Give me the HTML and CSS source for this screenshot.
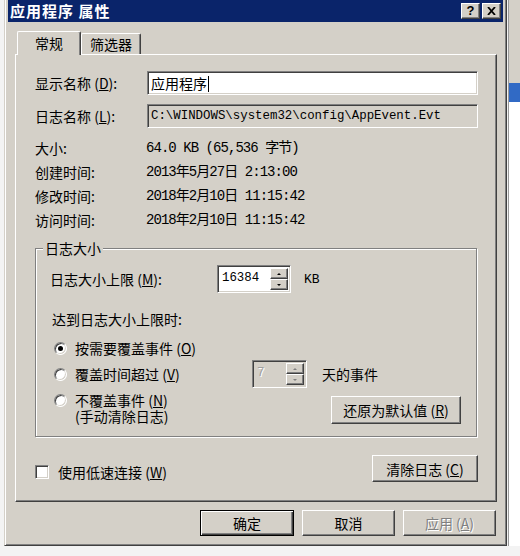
FILE: index.html
```html
<!DOCTYPE html>
<html lang="zh-CN">
<head>
	<meta charset="UTF-8">
	<title>应用程序 属性</title>
	<link rel="stylesheet" href="styles.css">
</head>
<body>

	<div class="backdrop"></div>

	<div class="window">
		<!-- 标题栏 -->
		<div class="titlebar">
			<span class="title">应用程序 属性</span>
			<div class="title-btns">
				<span class="tbtn">?</span>
				<span class="tbtn">
					<svg width="9" height="8" viewBox="0 0 9 8"><path d="M1 0l7 8M8 0l-7 8" stroke="#000" stroke-width="1.8"/></svg>
				</span>
			</div>
		</div>

		<div class="client">
			<div class="tabs">
				<span class="tab active">常规</span>
				<span class="tab">筛选器</span>
			</div>

			<div class="panel">
				<div class="field-row">
					<span class="label">显示名称 (<u>D</u>):</span>
					<div class="field">应用程序<span class="caret"></span></div>
				</div>
				<div class="field-row">
					<span class="label">日志名称 (<u>L</u>):</span>
					<div class="field readonly">C:\WINDOWS\system32\config\AppEvent.Evt</div>
				</div>

				<div class="info">
					<div class="info-row"><span class="label">大小:</span><span class="value">64.0 KB (65,536 字节)</span></div>
					<div class="info-row"><span class="label">创建时间:</span><span class="value">2013年5月27日 2:13:00</span></div>
					<div class="info-row"><span class="label">修改时间:</span><span class="value">2018年2月10日 11:15:42</span></div>
					<div class="info-row"><span class="label">访问时间:</span><span class="value">2018年2月10日 11:15:42</span></div>
				</div>

				<!-- 日志大小 -->
				<div class="group">
					<span class="group-title">日志大小</span>

					<div class="limit-row">
						<span class="limit-label">日志大小上限 (<u>M</u>):</span>
						<div class="spin">
							<span class="spin-text">16384</span>
							<span class="spin-btns"><span class="spin-up"></span><span class="spin-down"></span></span>
						</div>
						<span class="unit">KB</span>
					</div>

					<div class="when">达到日志大小上限时:</div>

					<div class="radio-row first">
						<span class="radio checked"></span>
						<span class="radio-label">按需要覆盖事件 (<u>O</u>)</span>
					</div>
					<div class="radio-row days">
						<span class="radio"></span>
						<span class="radio-label">覆盖时间超过 (<u>V</u>)</span>
						<div class="spin small disabled">
							<span class="spin-text">7</span>
							<span class="spin-btns"><span class="spin-up"></span><span class="spin-down"></span></span>
						</div>
						<span class="days-text">天的事件</span>
					</div>
					<div class="radio-row last">
						<span class="radio"></span>
						<span class="radio-label two">不覆盖事件 (<u>N</u>)<br>(手动清除日志)</span>
						<span class="btn restore">还原为默认值 (<u>R</u>)</span>
					</div>
				</div>

				<div class="bottom-row">
					<span class="check"></span>
					<span class="check-label">使用低速连接 (<u>W</u>)</span>
					<span class="btn clear">清除日志 (<u>C</u>)</span>
				</div>
			</div>

			<div class="actions">
				<span class="btn default">确定</span>
				<span class="btn">取消</span>
				<span class="btn disabled">应用 (<u>A</u>)</span>
			</div>
		</div>
	</div>

</body>
</html>
```

FILE: styles.css
```css
*{margin: 0;padding: 0;box-sizing: border-box;}
html{background-color: #f3f3f3;}
body{position: relative;font-family: "Noto Sans CJK SC", "Liberation Sans", sans-serif;font-size: 14px;color: #000;}

.backdrop{position: absolute;left: 508px;top: 0;width: 12px;height: 548px;background: linear-gradient(#d4d0c8 0, #d4d0c8 83px, #316ac5 83px, #316ac5 102px, #fff 102px);border-left: 1px solid #9a9a9a;}

.window{position: relative;width: 503px;margin: -4px 0 0 4px;background-color: #d4d0c8;padding: 3px;border: 1px solid;border-color: #d4d0c8 #404040 #404040 #d4d0c8;box-shadow: inset 1px 1px #fff, inset -1px -1px #808080;}

/* 标题栏 */
.titlebar{height: 22px;background-color: #0a246a;display: flex;align-items: center;justify-content: space-between;padding: 0 2px;}
.title{color: #fff;font-weight: bold;font-size: 15px;letter-spacing: 1px;line-height: 22px;}
.title-btns{display: flex;gap: 2px;}
.tbtn{width: 19px;height: 16px;background-color: #d4d0c8;border: 1px solid;border-color: #fff #404040 #404040 #fff;box-shadow: inset -1px -1px #808080;display: flex;align-items: center;justify-content: center;font-family: "Liberation Sans", sans-serif;font-weight: bold;font-size: 13px;line-height: 14px;}

.client{padding: 9px 6px 6px 7px;}

/* 选项卡 */
.tabs{display: flex;align-items: flex-end;height: 24px;margin-bottom: -1px;padding-left: 2px;}
.tab{height: 21px;margin-bottom: 1px;padding: 1px 8px 0;line-height: 19px;background-color: #d4d0c8;border: 1px solid;border-bottom: none;border-color: #fff #404040 #404040 #fff;border-radius: 2px 2px 0 0;box-shadow: inset -1px 0 #808080;}
.tab.active{position: relative;z-index: 1;height: 24px;margin-bottom: 0;padding: 1px 17px 0;line-height: 20px;}

.panel{height: 448px;padding: 16px 18px 0 19px;border: 1px solid;border-color: #fff #404040 #404040 #fff;box-shadow: inset -1px -1px #808080;}

.field-row{display: grid;grid-template-columns: 112px 1fr;align-items: center;height: 24px;}
.field-row + .field-row{margin-top: 9px;}
.field{height: 24px;padding-left: 3px;line-height: 22px;background-color: #fff;border: 1px solid;border-color: #808080 #fff #fff #808080;box-shadow: inset 1px 1px #404040, inset -1px -1px #d4d0c8;white-space: nowrap;overflow: hidden;}
.field.readonly{background-color: #d4d0c8;font-family: "Liberation Mono", monospace;font-size: 12.4px;padding-left: 3px;}
.caret{display: inline-block;width: 1px;height: 16px;background-color: #000;vertical-align: -3px;margin-left: 1px;}

.info{margin-top: 8px;}
.info-row{display: grid;grid-template-columns: 111px 1fr;line-height: 24px;}
.value{font-family: "Liberation Mono", "Noto Sans CJK SC", monospace;letter-spacing: -0.95px;}

/* 日志大小 */
.group{margin: 16px 1px 0 0;padding: 0 15px 12px 14px;border: 1px solid #808080;box-shadow: inset 1px 1px #fff, 1px 1px #fff;}
.group-title{display: table;margin: -11px 0 0 -7px;padding: 0 2px;line-height: 20px;background-color: #d4d0c8;}

.limit-row{display: flex;align-items: center;height: 28px;margin-top: 7px;}
.limit-label{width: 167px;}
.unit{margin-left: 13px;font-family: "Liberation Mono", monospace;font-size: 13px;}

.spin{display: flex;width: 74px;height: 28px;background-color: #fff;border: 1px solid;border-color: #808080 #fff #fff #808080;box-shadow: inset 1px 1px #404040, inset -1px -1px #d4d0c8;padding: 2px 2px 2px 2px;}
.spin-text{flex: 1;padding-left: 2px;line-height: 20px;font-family: "Liberation Mono", monospace;font-size: 12.4px;}
.spin-btns{display: flex;flex-direction: column;width: 18px;}
.spin-up,.spin-down{flex: 1;position: relative;background-color: #d4d0c8;border: 1px solid;border-color: #fff #404040 #404040 #fff;box-shadow: inset -1px -1px #808080;}
.spin-up::after,.spin-down::after{content: "";position: absolute;left: 50%;top: 50%;margin: -1px 0 0 -2px;border-left: 2px solid transparent;border-right: 2px solid transparent;}
.spin-up::after{border-bottom: 2px solid #000;}
.spin-down::after{border-top: 2px solid #000;}
.spin.small{width: 55px;}
.spin.disabled{background-color: #d4d0c8;}
.spin.disabled .spin-text{color: #a0a0a0;text-shadow: 1px 1px #fff;}
.spin.disabled .spin-up::after{border-bottom-color: #808080;}
.spin.disabled .spin-down::after{border-top-color: #808080;}

.when{margin: 16px 0 0 2px;line-height: 20px;}

.radio-row{display: flex;align-items: center;height: 24px;}
.radio-row.first{margin-top: 7px;}
.radio{flex: none;width: 13px;height: 13px;margin: 0 8px 0 4px;border-radius: 50%;background-color: #fff;border: 1px solid;border-color: #808080 #fff #fff #808080;box-shadow: inset 1px 1px #404040, inset -1px -1px #d4d0c8;position: relative;}
.radio.checked::after{content: "";position: absolute;left: 3px;top: 3px;width: 5px;height: 5px;border-radius: 50%;background-color: #000;}
.radio-row.days{height: 28px;}
.radio-row.days .radio-label{width: 177px;}
.days-text{margin-left: 15px;}
.radio-row.last{height: auto;align-items: flex-start;}
.radio-row.last .radio{margin-top: 6px;}
.radio-label.two{margin-top: 4px;line-height: 16px;}

.btn{display: flex;align-items: center;justify-content: center;height: 26px;width: 93px;background-color: #d4d0c8;border: 1px solid;border-color: #fff #404040 #404040 #fff;box-shadow: inset -1px -1px #808080;white-space: nowrap;}
.btn.restore{width: 130px;height: 28px;margin: 8px 0 0 auto;}
.btn.default{width: 94px;border-color: #000;box-shadow: inset 1px 1px #fff, inset -1px -1px #404040, inset -2px -2px #808080;}
.btn.disabled{color: #808080;text-shadow: 1px 1px #fff;}

.bottom-row{display: flex;align-items: flex-start;margin-top: 18px;}
.check{flex: none;width: 14px;height: 14px;margin-top: 10px;background-color: #fff;border: 1px solid;border-color: #808080 #fff #fff #808080;box-shadow: inset 1px 1px #404040, inset -1px -1px #d4d0c8;}
.check-label{margin: 9px 0 0 9px;line-height: 16px;}
.btn.clear{width: 106px;height: 27px;margin-left: auto;}

.actions{display: flex;justify-content: flex-end;gap: 8px;margin-top: 8px;padding-right: 1px;}
```
